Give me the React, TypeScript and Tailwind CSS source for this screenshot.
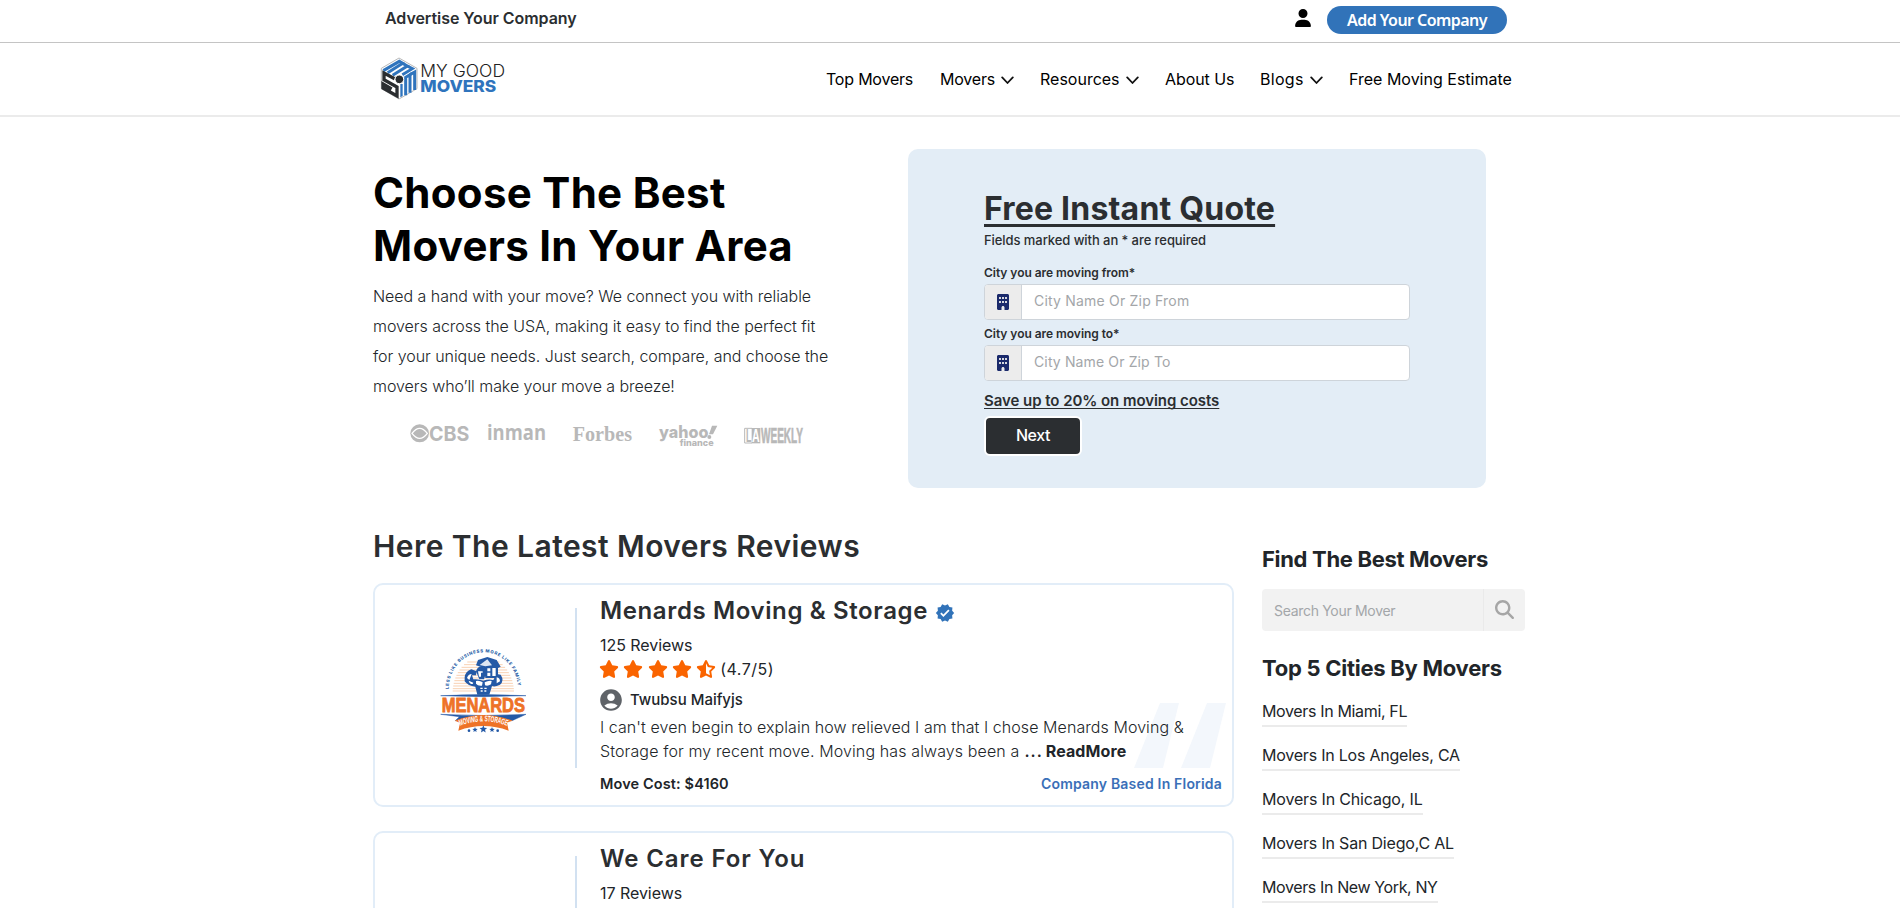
import {
  FaBuilding,
  FaMagnifyingGlass,
  FaStar,
  FaStarHalfStroke,
  FaUser,
} from "react-icons/fa6";
import { MdAccountCircle, MdVerified } from "react-icons/md";

function Chevron() {
  return (
    <svg width="13" height="9" viewBox="0 0 13 9" className="mt-[3px] ml-[6px]" fill="none" stroke="#111" strokeWidth="1.8" strokeLinecap="round" strokeLinejoin="round">
      <path d="M1.2 1.4 6.5 7 11.8 1.4" />
    </svg>
  );
}

function BrandLogo() {
  return (
    <svg width="132" height="50" viewBox="0 0 396 150" className="block">
      <polygon points="72,12 126,43 126,104 72,135 19,104 19,43" fill="#fff" stroke="#b9b9b9" strokeWidth="3" />
      <g fill="none" stroke="#2f74bd" strokeWidth="9" strokeLinejoin="miter">
        <path d="M25 50 L73 22 L83 28 L38 56" />
        <path d="M83 28 L97 36 L53 64" />
        <path d="M97 36 L112 44 L82 62" />
        <path d="M92 124 V70 L105 62 V116" />
        <path d="M105 62 L119 54 V108" />
      </g>
      <g fill="none" stroke="#2a2d30" strokeWidth="10">
        <path d="M59 74 L27 57 V77 L66 99 V126 L24 102 V90 L50 105" />
      </g>
      <path d="M76 90 h7 v36 l-7 4z" fill="#2f74bd" />
      <circle cx="73" cy="76" r="13" fill="#2a2d30" stroke="#fff" strokeWidth="3" />
      <text x="136" y="70" fontFamily="Inter, sans-serif" fontSize="50" fontWeight="300" fill="#222" textLength="254" lengthAdjust="spacingAndGlyphs">MY GOOD</text>
      <text x="136" y="114" fontFamily="Inter, sans-serif" fontSize="49" fontWeight="800" fill="#2f74bd" textLength="228" lengthAdjust="spacingAndGlyphs">MOVERS</text>
    </svg>
  );
}

function PressLogos() {
  return (
    <div className="mt-[8px] ml-[27px] flex">
      <svg width="78" height="50" viewBox="0 0 234 150" fill="#b8b8b8">
        <ellipse cx="59" cy="73" rx="28" ry="27" />
        <path d="M36 73 Q59 43 82 73 Q59 103 36 73Z" fill="none" stroke="#fff" strokeWidth="4" />
        <text x="87" y="95" fontFamily="Inter, sans-serif" fontSize="61" fontWeight="700" textLength="121" lengthAdjust="spacingAndGlyphs">CBS</text>
      </svg>
      <svg width="82" height="50" viewBox="234 0 246 150" fill="#b8b8b8">
        <text x="261" y="94" fontFamily="Open Sans, sans-serif" fontSize="62" fontWeight="700" textLength="177" lengthAdjust="spacingAndGlyphs">inman</text>
      </svg>
      <svg width="86" height="50" viewBox="480 0 258 150" fill="#b8b8b8">
        <text x="518" y="95" fontFamily="Liberation Serif, serif" fontSize="66" fontWeight="700" textLength="178" lengthAdjust="spacingAndGlyphs">Forbes</text>
      </svg>
      <svg width="86" height="50" viewBox="738 0 258 150" fill="#b8b8b8">
        <text x="777" y="87" fontFamily="Inter, sans-serif" fontSize="50" fontWeight="800" textLength="148" lengthAdjust="spacingAndGlyphs">yahoo</text>
        <polygon points="936,50 952,50 939,76 927,76" />
        <circle cx="928" cy="84" r="6" />
        <text x="839" y="112" fontFamily="Inter, sans-serif" fontSize="27" fontWeight="800" textLength="102" lengthAdjust="spacingAndGlyphs">finance</text>
      </svg>
      <svg width="88" height="50" viewBox="996 0 264 150" fill="#b8b8b8">
        <path d="M1056 58 H1034 V102 H1056" fill="none" stroke="#b8b8b8" strokeWidth="3" />
        <rect x="1055" y="57" width="26" height="46" />
        <text x="1038" y="99" fontFamily="Liberation Sans Narrow, Liberation Sans, sans-serif" fontSize="54" fontWeight="700" textLength="16" lengthAdjust="spacingAndGlyphs">L</text>
        <text x="1056" y="99" fontFamily="Liberation Sans Narrow, Liberation Sans, sans-serif" fontSize="54" fontWeight="700" fill="#fff" textLength="23" lengthAdjust="spacingAndGlyphs">A</text>
        <text x="1083" y="103" fontFamily="Liberation Sans Narrow, Liberation Sans, sans-serif" fontSize="65" fontWeight="700" stroke="#b8b8b8" strokeWidth="2" textLength="126" lengthAdjust="spacingAndGlyphs">WEEKLY</text>
      </svg>
    </div>
  );
}

const skyLines = [66, 74, 82, 90, 98, 106, 114, 122, 130, 138, 146, 153];

function MenardsLogo() {
  return (
    <svg width="110" height="100" viewBox="0 0 330 300" className="mt-[55px] ml-[51px] block">
      <defs>
        <path id="motto-arc" d="M68 147 A104 110 0 0 1 276 147" />
        <path id="ribbon-arc" d="M102 257 Q172 231 242 257" />
      </defs>
      <g stroke="#f6c6a2" strokeWidth="2.5">
        {skyLines.map((y) => {
          const half = Math.sqrt(Math.max(0, 1 - ((158 - y) / 108) ** 2)) * 92;
          return <line key={y} x1={172 - half} x2={172 + half} y1={y} y2={y} />;
        })}
      </g>
      <text fontFamily="Inter, sans-serif" fontSize="13" fontWeight="800" fill="#2a5fa8">
        <textPath href="#motto-arc" textLength="326">LESS LIKE BUSINESS MORE LIKE FAMILY</textPath>
      </text>
      <g fill="#2459a6">
        <path d="M150 76 L156 60 L184 51 L212 60 L224 80 L216 84 L216 114 L178 114 L174 84 Z" />
        <path d="M116 112 Q118 94 136 88 L152 94 L150 106 L138 106 L142 118 Q158 116 172 122 Q188 116 202 120 L212 102 L224 104 Q236 122 222 134 Q206 142 198 138 L190 164 H154 L148 140 Q126 138 116 124 Z" />
        <path d="M150 94 q4 -16 20 -14 q12 4 10 20 l-6 18 h-14 z" />
      </g>
      <g fill="#fff">
        <path d="M161 75 L184 58 L198 76 L178 79Z" opacity=".85" />
        <path d="M184 85 h9 v9 h-9z M199 84 h10 v24 h-10z M184 98 h9 v10 h-9z" />
        <path d="M156 94 h14 v4 h-5 v12 h-6z" />
        <path d="M150 123 Q161 121 170 127 L168 137 Q156 139 150 131Z M176 127 Q188 121 197 123 L195 133 Q186 139 177 136Z" />
        <path d="M163 143 h7 v4 h-7z M175 143 h7 v4 h-7z M164 151 h6 v4 h-6z M175 151 h6 v4 h-6z M123 114 q4 -12 14 -12 q-3 8 -7 18z M212 112 q10 2 10 12 l-10 6z M128 122 l14 6 l-2 4 q-10 0 -12 -10z" />
      </g>
      <path d="M44 167 Q172 160 300 167 L172 170Z M44 223 Q172 230 300 223 L258 242 Q172 214 88 242 L100 230Z" fill="#2459a6" stroke="#2459a6" strokeWidth="1.5" />
      <text x="47" y="215" fontFamily="Liberation Sans, sans-serif" fontSize="58" fontWeight="700" fill="#ee7227" stroke="#ee7227" strokeWidth="2.5" textLength="250" lengthAdjust="spacingAndGlyphs">MENARDS</text>
      <path d="M86 242 Q172 208 260 242 L243 248 L248 272 Q172 244 97 272 L102 248Z" fill="#ee7227" />
      <text fontFamily="Liberation Sans Narrow, Liberation Sans, sans-serif" fontSize="25" fontWeight="700" fill="#fff">
        <textPath href="#ribbon-arc" textLength="144" lengthAdjust="spacingAndGlyphs">MOVING &amp; STORAGE</textPath>
      </text>
      <g fill="#2459a6">
        <path d="M172 256 l3.2 7.6 8.2 .6 -6.3 5.3 2 8 -7.1 -4.3 -7.1 4.3 2 -8 -6.3 -5.3 8.2 -.6z" />
        <path d="M147 261 l2.2 5.4 5.8 .4 -4.5 3.8 1.4 5.6 -4.9 -3 -4.9 3 1.4 -5.6 -4.5 -3.8 5.8 -.4z" />
        <path d="M198 261 l2.2 5.4 5.8 .4 -4.5 3.8 1.4 5.6 -4.9 -3 -4.9 3 1.4 -5.6 -4.5 -3.8 5.8 -.4z" />
        <circle cx="129" cy="272" r="4" />
        <circle cx="215" cy="272" r="4" />
      </g>
    </svg>
  );
}

function CityField({ label, labelClass, placeholder, placeholderClass }: { label: string; labelClass: string; placeholder: string; placeholderClass: string }) {
  return (
    <div>
      <div className={`text-xs leading-[18px] font-semibold ${labelClass}`}>{label}</div>
      <div className="mt-0.5 flex h-9 w-[426px] overflow-hidden rounded-[4px] border border-[#ced4da] bg-white">
        <div className="flex w-[37px] items-center justify-center border-r border-[#ced4da] bg-[#ececec]">
          <FaBuilding size={16} color="#1b2a6b" />
        </div>
        <div className={`pl-3 text-sm leading-8 text-[#a3a6a9] ${placeholderClass}`}>{placeholder}</div>
      </div>
    </div>
  );
}

type Review = {
  name: string;
  nameClass: string;
  verified: boolean;
  reviews: string;
  full: boolean;
};

const reviews: Review[] = [
  { name: "Menards Moving & Storage", nameClass: "tracking-[0.62px]", verified: true, reviews: "125 Reviews", full: true },
  { name: "We Care For You", nameClass: "tracking-[0.9px]", verified: false, reviews: "17 Reviews", full: false },
];

function ReviewCard({ review }: { review: Review }) {
  return (
    <article className="relative flex h-56 w-[861px] rounded-[10px] border-2 border-[#e2edf8] bg-white">
      <div className="w-[200px] shrink-0">{review.full && <MenardsLogo />}</div>
      <div className="mt-[23px] h-40 w-0.5 shrink-0 bg-[#d2e1f1]" />
      <svg width="92" height="65" viewBox="0 0 92 65" className="absolute top-[118px] right-[6px]" fill="#f3f7fc">
        <polygon points="26,0 45,0 29,65 0,65" />
        <polygon points="73,0 92,0 76,65 47,65" />
      </svg>
      <div className="relative flex-1 pt-[11px] pr-[10px] pl-[23px] text-[#212529]">
        <div className="flex h-[30px] items-center">
          <h3 className={`text-2xl leading-[30px] font-semibold whitespace-nowrap text-[#2b2e31] ${review.nameClass}`}>{review.name}</h3>
          {review.verified && <MdVerified size={20} color="#3173b9" className="mt-[3px] ml-[7px]" />}
        </div>
        <div className="mt-2 text-base leading-[23px] tracking-[-0.05px]">{review.reviews}</div>
        <div className="flex h-[23px] items-center">
          <div className="-ml-px flex gap-[4.3px]">
            <FaStar size={20} color="#fa6400" />
            <FaStar size={20} color="#fa6400" />
            <FaStar size={20} color="#fa6400" />
            <FaStar size={20} color="#fa6400" />
            <FaStarHalfStroke size={20} color="#fa6400" />
          </div>
          <span className="ml-1 text-base leading-[22px] tracking-[0.5px]">(4.7/5)</span>
        </div>
        {review.full && (
          <>
            <div className="mt-[9px] flex h-[22px] items-center">
              <MdAccountCircle size={26} color="#5f6368" className="-ml-[2px] shrink-0" />
              <span className="ml-[6px] text-[15px] leading-[22px] font-medium">Twubsu Maifyjs</span>
            </div>
            <p className="mt-1 text-base leading-6 font-light whitespace-nowrap">
              <span className="tracking-[0.07px]">I can't even begin to explain how relieved I am that I chose Menards Moving &amp;</span>
              <br />
              <span className="tracking-[0.12px]">Storage for my recent move. Moving has always been a</span>
              <span className="ml-[5px] font-semibold tracking-[1px]">...</span>
              <span className="ml-[3px] font-bold tracking-[0.1px]">ReadMore</span>
            </p>
            <div className="mt-[11px] flex justify-between leading-5 font-semibold">
              <span className="text-[14.5px] tracking-[0.12px]">Move Cost: $4160</span>
              <span className="text-sm tracking-[0.19px] text-[#3a6fb8]">Company Based In Florida</span>
            </div>
          </>
        )}
      </div>
    </article>
  );
}

const cities = [
  { name: "Movers In Miami, FL", cls: "tracking-[-0.35px]" },
  { name: "Movers In Los Angeles, CA", cls: "tracking-[-0.22px]" },
  { name: "Movers In Chicago, IL", cls: "tracking-[-0.17px]" },
  { name: "Movers In San Diego,C AL", cls: "tracking-[-0.19px]" },
  { name: "Movers In New York, NY", cls: "tracking-[-0.38px]" },
];

export default function App() {
  return (
    <div className="h-[908px] w-full overflow-hidden bg-white font-['Inter',sans-serif] text-[#212529]">
      <div className="flex h-[43px] justify-between border-b border-[#c4c4c4] pr-[393px] pl-[385px]">
        <span className="text-base leading-9 font-semibold tracking-[-0.05px] text-[#2b2e31]">Advertise Your Company</span>
        <div className="flex items-start">
          <FaUser size={18} color="#000" className="mt-[9px] mr-[15px]" />
          <button className="mt-1.5 h-7 w-[180px] rounded-full bg-[#3173b9] font-['Noto_Sans',sans-serif] text-base leading-7 font-semibold tracking-[-0.55px] text-white">
            Add Your Company
          </button>
        </div>
      </div>

      <header className="flex h-[74px] items-center border-b-2 border-[#ebebeb] pl-[375px] text-black">
        <BrandLogo />
        <nav className="ml-[319px] flex text-base leading-6 whitespace-nowrap">
          <a className="w-[114px] tracking-[-0.21px]">Top Movers</a>
          <a className="flex w-[100px] items-center tracking-[-0.2px]">Movers<Chevron /></a>
          <a className="flex w-[125px] items-center">Resources<Chevron /></a>
          <a className="w-[95px] tracking-[-0.08px]">About Us</a>
          <a className="flex w-[89px] items-center tracking-[0.3px]">Blogs<Chevron /></a>
          <a>Free Moving Estimate</a>
        </nav>
      </header>

      <section className="flex h-[371px] pl-[373px]">
        <div className="w-[535px] pt-[49px]">
          <h1 className="text-[42px] leading-[53px] font-bold tracking-[0.3px] whitespace-nowrap text-black">
            Choose The Best
            <br />
            Movers In Your Area
          </h1>
          <p className="mt-[9px] text-base leading-[30px] font-light tracking-[-0.05px] whitespace-nowrap">
            Need a hand with your move? We connect you with reliable
            <br />
            movers across the USA, making it easy to find the perfect fit
            <br />
            for your unique needs. Just search, compare, and choose the
            <br />
            movers who’ll make your move a breeze!
          </p>
          <PressLogos />
        </div>
        <div className="mt-8 h-[339px] w-[578px] rounded-[10px] bg-[#e3edf6] pt-10 pl-[76px] text-[#2b2e31]">
          <h2 className="h-[41px] w-[291px] text-[32px] leading-10 font-bold tracking-[0.2px] whitespace-nowrap underline decoration-[3px] underline-offset-[4px] [text-decoration-skip-ink:none]">
            Free Instant Quote
          </h2>
          <div className="text-[13px] leading-5 font-medium tracking-[-0.07px]">Fields marked with an * are required</div>
          <div className="mt-[14px] flex flex-col gap-[5px]">
            <CityField label="City you are moving from*" labelClass="tracking-[-0.04px]" placeholder="City Name Or Zip From" placeholderClass="tracking-[0.2px]" />
            <CityField label="City you are moving to*" labelClass="tracking-[-0.04px]" placeholder="City Name Or Zip To" placeholderClass="tracking-[0.13px]" />
          </div>
          <div className="mt-[9px] text-[15px] leading-[22px] font-semibold tracking-[-0.05px] underline underline-offset-2 [text-decoration-skip-ink:none]">
            Save up to 20% on moving costs
          </div>
          <button className="mt-1 h-10 w-[98px] rounded-[6px] border-2 border-white bg-[#2b2e31] pb-0.5 text-base leading-[34px] font-medium tracking-[-0.4px] text-white">
            Next
          </button>
        </div>
      </section>

      <main className="flex pt-10 pl-[373px]">
        <div className="flex flex-col">
          <h2 className="text-3xl leading-9 font-semibold tracking-[0.44px] text-[#2b2e31]">Here The Latest Movers Reviews</h2>
          <div className="mt-[19px] flex flex-col gap-6">
            {reviews.map((r) => (
              <ReviewCard key={r.name} review={r} />
            ))}
          </div>
        </div>
        <aside className="ml-7 pt-[17px]">
          <h2 className="text-[22px] leading-7 font-bold tracking-[-0.32px]">Find The Best Movers</h2>
          <div className="mt-4 flex h-[42px] w-[263px] overflow-hidden rounded-[4px] bg-[#f2f2f2]">
            <div className="w-[222px] border-r border-[#eaeaea] pl-3 text-sm leading-[43px] tracking-[-0.31px] text-[#a3a6a9]">Search Your Mover</div>
            <div className="flex flex-1 justify-center pt-[11px]">
              <FaMagnifyingGlass size={19} color="#a6a6a6" />
            </div>
          </div>
          <h2 className="mt-[23px] text-[22px] leading-7 font-bold tracking-[-0.26px]">Top 5 Cities By Movers</h2>
          <ul className="mt-[17px] flex flex-col items-start gap-4">
            {cities.map((c) => (
              <li key={c.name} className={`border-b-2 border-[#ebebeb] pb-0.5 text-base leading-6 ${c.cls}`}>
                {c.name}
              </li>
            ))}
          </ul>
        </aside>
      </main>
    </div>
  );
}
